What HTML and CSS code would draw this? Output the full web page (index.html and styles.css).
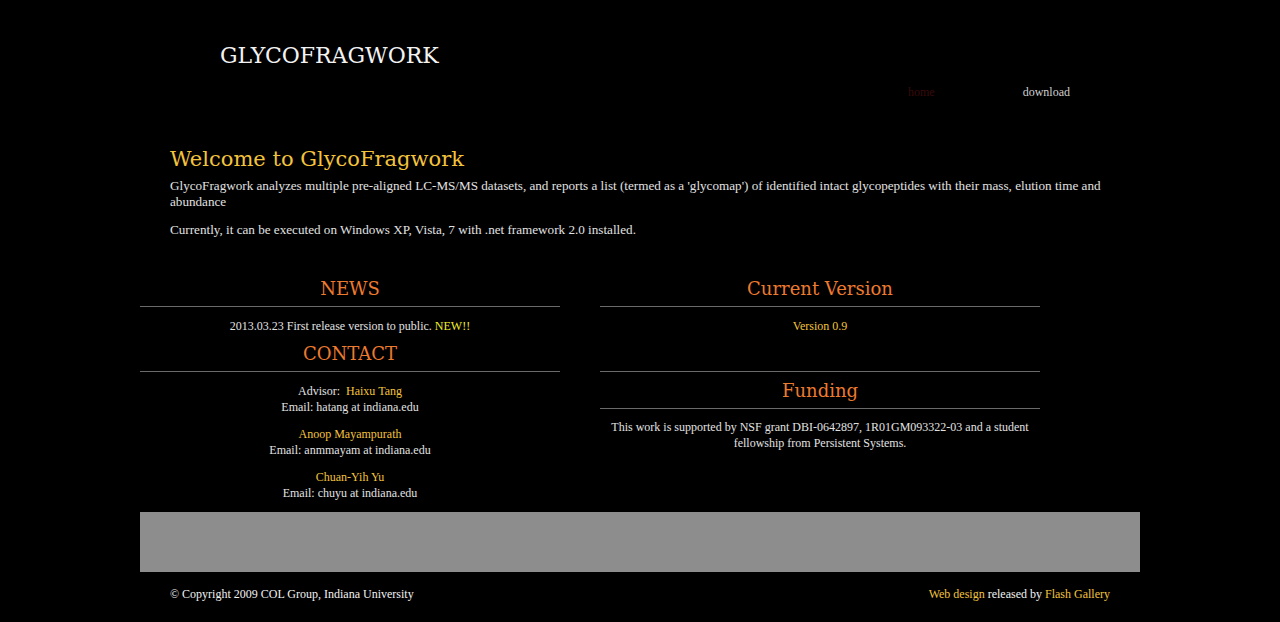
FILE: index.html
```html
<!DOCTYPE html>
<html>
<head>
<meta charset="utf-8">
<title>GlycoFragwork</title>
<link rel="stylesheet" href="styles.css">
</head>
<body>
<div class="page">
  <header class="header">
    <div class="logo">GLYCOFRAGWORK</div>
    <nav class="nav">
      <a class="nav-home" href="#">home</a>
      <a class="nav-link" href="#">download</a>
    </nav>
  </header>
  <section class="intro">
    <h1 class="title">Welcome to GlycoFragwork</h1>
    <p>GlycoFragwork analyzes multiple pre-aligned LC-MS/MS datasets, and reports a list (termed as a 'glycomap') of identified intact glycopeptides with their mass, elution time and abundance</p>
    <p>Currently, it can be executed on Windows XP, Vista, 7 with .net framework 2.0 installed.</p>
  </section>
  <div class="columns">
    <div class="col col-left">
      <h2 class="sec">NEWS</h2>
      <hr class="rule">
      <p class="news">2013.03.23 First release version to public. <span class="new">NEW!!</span></p>
      <h2 class="sec sec-contact">CONTACT</h2>
      <hr class="rule">
      <p class="contact">Advisor:&nbsp; <span class="name">Haixu Tang</span><br>Email: hatang at indiana.edu</p>
      <p class="contact"><span class="name">Anoop Mayampurath</span><br>Email: anmmayam at indiana.edu</p>
      <p class="contact"><span class="name">Chuan-Yih Yu</span><br>Email: chuyu at indiana.edu</p>
    </div>
    <div class="col col-right">
      <h2 class="sec">Current Version</h2>
      <hr class="rule">
      <p class="news"><span class="name">Version 0.9</span></p>
      <hr class="rule rule-gap">
      <h2 class="sec sec-fund">Funding</h2>
      <hr class="rule">
      <p class="news news-fund">This work is supported by NSF grant DBI-0642897, 1R01GM093322-03 and a student fellowship from Persistent Systems.</p>
    </div>
  </div>
  <div class="band"></div>
  <footer class="footer">
    <span>&copy; Copyright 2009 COL Group, Indiana University</span>
    <span><span class="name">Web design</span> released by <span class="name">Flash Gallery</span></span>
  </footer>
</div>
</body>
</html>
```
FILE: styles.css
```css
html, body {
  margin: 0;
  padding: 0;
  background: #000;
}
body {
  font-family: "Liberation Serif", "DejaVu Serif", serif;
  color: #e2e2e2;
  font-size: 12px;
  line-height: 16px;
}
.page {
  width: 1000px;
  margin: 0 auto;
}
.header {
  height: 120px;
}
.logo {
  padding: 41px 0 0 80px;
  font-family: "DejaVu Serif", serif;
  font-size: 22px;
  line-height: 30px;
  color: #f2f2f2;
}
.nav {
  display: flex;
  padding: 13px 0 0 768px;
  gap: 88px;
}
.nav a {
  text-decoration: none;
}
.nav-home { color: #3a0a0a; }
.nav-link { color: #cfcfcf; }
.intro {
  padding: 24px 30px 0 30px;
}
.title {
  margin: 0;
  font-family: "DejaVu Serif", serif;
  font-size: 21px;
  line-height: 30px;
  font-weight: normal;
  color: #f3c33c;
}
.intro p {
  margin: 4px 0 12px;
  font-size: 13.15px;
}
.columns {
  display: grid;
  grid-template-columns: 420px 440px;
  column-gap: 40px;
  margin-top: 39px;
}
.col {
  text-align: center;
}
.sec {
  margin: 0;
  font-family: "DejaVu Serif", serif;
  font-size: 18px;
  line-height: 24px;
  font-weight: normal;
  color: #ee7a2e;
}
.rule {
  border: 0;
  border-top: 1px solid #6a6a6a;
  margin: 5px 0 0;
  height: 0;
}
.news {
  margin: 11px 0 0;
}
.sec-contact { margin-top: 8px; }
.rule-gap { margin-top: 37px; }
.sec-fund { margin-top: 7px; }
.news-fund { margin-top: 10px; }
.contact {
  margin: 11px 0 0;
}
.contact + .contact { margin-top: 11px; }
.name { color: #f3c33c; }
.new { color: #f2ee2a; }
.band {
  margin-top: 11px;
  height: 60px;
  background: #8d8d8d;
}
.footer {
  display: flex;
  justify-content: space-between;
  padding: 14px 30px;
  color: #f2f2f2;
}
```
